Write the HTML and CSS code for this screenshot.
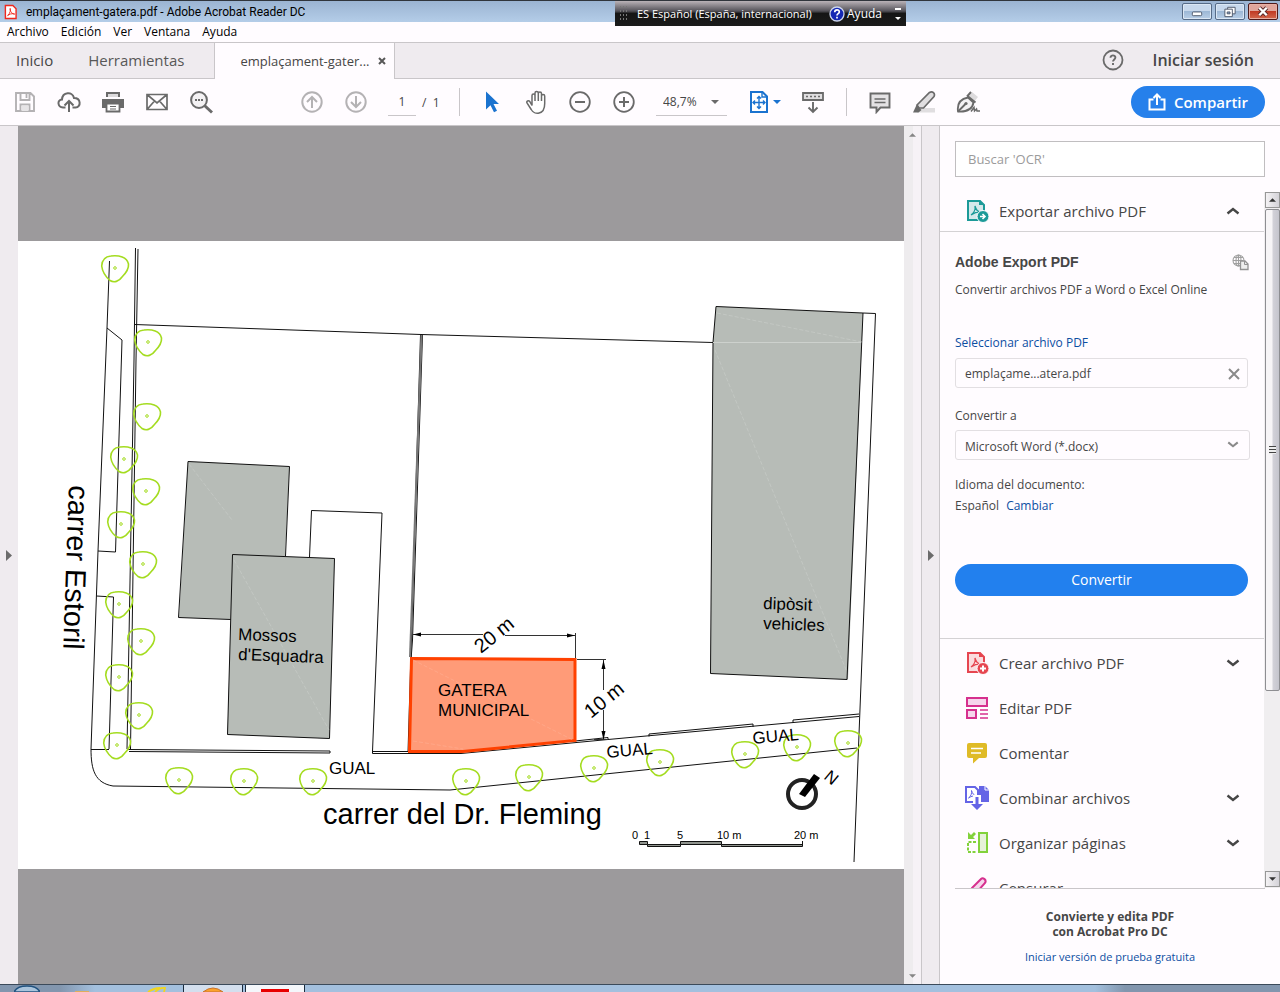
FILE: index.html
```html
<!DOCTYPE html>
<html lang="es">
<head>
<meta charset="utf-8">
<meta name="viewport" content="width=device-width, initial-scale=1">
<title>emplaçament-gatera.pdf - Adobe Acrobat Reader DC</title>
<link rel="stylesheet" href="styles.css">
</head>
<body>
<svg class="defs" aria-hidden="true">
  <symbol id="tree" viewBox="-15 -15 30 30" overflow="visible"><path d="M-13.300-2C-13-8-10-11.500-4-12 4-13 12-11 13.500-4 14 1 11 5 7 9 4 13.500-1 15-5 12.500-9 9-12.500 5-13.300-2Z" fill="none" stroke="#a4dc20" stroke-width="1.600"/><circle r="1.300" fill="none" stroke="#a4dc20"/></symbol>
  <symbol id="chev" viewBox="0 0 14 8"><path d="M1.500 1.500 7 6l5.500-4.500" fill="none" stroke="currentColor" stroke-width="2.400"/></symbol>
  <symbol id="caret" viewBox="0 0 8 4"><path d="M0 0h8L4 4z" fill="currentColor"/></symbol>
</svg>

<header class="titlebar">
  <svg class="app-icon" viewBox="0 0 14 16"><path d="M1.500 1h8l3.500 3.500V15H1.500z" fill="#fff" stroke="#f0281e" stroke-width="1.500"/><path d="M3.500 12.500c1.500-1 3.500-4.500 3.500-7.500 0-1.500-1-1-.5.500.7 2.500 2.500 4.500 4.500 5 1 0 .5-1-1-.8-2 0-4 .6-6 1.600" fill="none" stroke="#f0281e"/></svg>
  <h1 class="title">emplaçament-gatera.pdf - Adobe Acrobat Reader DC</h1>
  <div class="window-buttons">
    <button class="win" aria-label="Minimizar"><svg viewBox="0 0 30 16"><rect x="10" y="8.500" width="10" height="4" rx="1" fill="#fff" stroke="#4b5669"/></svg></button>
    <button class="win" aria-label="Restaurar"><svg viewBox="0 0 30 16"><path d="M12.500 3.500h8v7h-8z" fill="#fff" stroke="#4b5669"/><path d="M9.500 5.500h8v8h-8z" fill="#fff" stroke="#4b5669"/><path d="M12 8.500h3v2h-3z" fill="#8fa9c8" stroke="#4b5669"/></svg></button>
    <button class="win win-close" aria-label="Cerrar"><svg viewBox="0 0 30 16"><path d="m11 4 8 8m0-8-8 8" stroke="#5a2a2a" stroke-width="4.500"/><path d="m11 4 8 8m0-8-8 8" stroke="#fff" stroke-width="2.600"/></svg></button>
  </div>
  <div class="langbar">
    <span class="grip"></span>
    <span class="lang-name">ES Español (España, internacional)</span>
    <svg class="lang-q" viewBox="0 0 16 16"><circle cx="8" cy="8" r="7" fill="#1428b4" stroke="#cdd6ee" stroke-width="1.300"/><path d="M5.700 6.300c0-3.400 4.800-3.200 4.600-.3C10.200 7.600 8 7.600 8 9.400M8 10.800v1.800" fill="none" stroke="#fff" stroke-width="1.700"/></svg>
    <span class="lang-help">Ayuda</span>
    <svg class="lang-more" viewBox="0 0 6 14"><path d="M0 1h6v2H0zM0 10h6l-3 3z" fill="#fff"/></svg>
  </div>
</header>

<nav class="menubar">
  <button>Archivo</button><button>Edición</button><button>Ver</button><button>Ventana</button><button>Ayuda</button>
</nav>

<div class="tabs">
  <button class="tab tab-home">Inicio</button>
  <button class="tab tab-tools">Herramientas</button>
  <div class="tab-doc"><span>emplaçament-gater...</span><button aria-label="Cerrar pestaña"><svg viewBox="0 0 8 8"><path d="m1 1 6 6m0-6L1 7" stroke="#585858" stroke-width="2"/></svg></button></div>
  <div class="account">
    <button class="help" aria-label="Ayuda"><svg viewBox="0 0 22 22"><circle cx="11" cy="11" r="9.500" fill="none" stroke="#6a6a6a" stroke-width="1.800"/><path d="M8.500 8.700c0-3.200 5-3 4.900-.1 0 1.800-2.400 2-2.400 4M11 14v2" fill="none" stroke="#6a6a6a" stroke-width="1.900"/></svg></button>
    <button class="signin">Iniciar sesión</button>
  </div>
</div>

<div class="toolbar">
  <div class="group">
    <button class="tool" aria-label="Guardar"><svg viewBox="0 0 24 24"><path d="M3 3h14.500L21 6.500V21H3zM7.500 3v7h9V3M7.500 21v-6.500h9V21" fill="none" stroke="#b4b2b4" stroke-width="1.900"/><path d="M8.500 15.500h7V21h-7z" fill="#e6e4e6"/><path d="M13.500 4v4" stroke="#b4b2b4" stroke-width="1.800"/></svg></button>
    <button class="tool" aria-label="Subir"><svg viewBox="0 0 24 24"><path d="M8.500 17.500H6C.500 17-.200 10 5 9.500 5.500 2 15.500 1 17 8c7 0 7.500 9 1.500 9.500h-3M12 22V11m-4.500 4.500L12 11l4.500 4.500" fill="none" stroke="#6a6a6a" stroke-width="2"/></svg></button>
    <button class="tool" aria-label="Imprimir"><svg viewBox="0 0 24 24"><path d="M5 2h14v5H5zM1 9h22v9h-4v-4H5v4H1z" fill="#6a6a6a"/><path d="M7 4h10v3H7z" fill="#dcdadc"/><path d="M5.500 13.500h13v8h-13z" fill="#fff" stroke="#6a6a6a" stroke-width="1.800"/><path d="M9 16.500h6M9 19h6" stroke="#6a6a6a" stroke-width="1.200"/></svg></button>
    <button class="tool" aria-label="Correo"><svg viewBox="0 0 24 24"><path d="M2 4.500h20v15H2zl10 8.500 10-8.500M2 19.500l7.500-8.500M22 19.500 14.500 11" fill="none" stroke="#6a6a6a" stroke-width="1.700"/></svg></button>
    <button class="tool" aria-label="Buscar"><svg viewBox="0 0 24 24"><circle cx="10" cy="10" r="7.900" fill="#f4f2f4" stroke="#6a6a6a" stroke-width="2"/><path d="m15.500 15.500 7.500 7" stroke="#6a6a6a" stroke-width="3"/><path d="M6 10h2m1 0h2m1 0h2" stroke="#6a6a6a" stroke-width="2"/></svg></button>
  </div>
  <div class="group group-pages">
    <button class="tool" aria-label="Página anterior"><svg viewBox="0 0 24 24"><g fill="none" stroke="#b4b2b4" stroke-width="2"><circle cx="12" cy="12" r="9.700"/><path d="M12 18V7m-5 5 5-5 5 5"/></g></svg></button>
    <button class="tool" aria-label="Página siguiente"><svg viewBox="0 0 24 24"><g fill="none" stroke="#b4b2b4" stroke-width="2"><circle cx="12" cy="12" r="9.700"/><path d="M12 6v11m-5-5 5 5 5-5"/></g></svg></button>
    <input class="page-no" aria-label="Página" value="1"><span class="page-total">/&nbsp; 1</span>
  </div>
  <span class="sep"></span>
  <div class="group group-view">
    <button class="tool" aria-label="Seleccionar"><svg viewBox="0 0 24 24"><path d="M6 1.500v18l4.500-4.300 3.500 7 3-1.500-3.500-6.700H19z" fill="#1b73cf"/></svg></button>
    <button class="tool" aria-label="Mano"><svg viewBox="0 0 24 24"><path d="M7 15.500V5.500c0-2 3-2 3 0V11 3c0-2 3.300-2 3.300 0v8-7.500c0-2 3.200-2 3.200 0V11 6c0-2 3.200-2 3.200 0v7.500c0 12-10.500 11.500-13.500 6L2 13c-1-2 1.500-3 3-1.200z" transform="translate(1 0)" fill="#fff" stroke="#6a6a6a" stroke-width="1.500"/></svg></button>
    <button class="tool" aria-label="Reducir"><svg viewBox="0 0 24 24"><g fill="none" stroke="#6a6a6a" stroke-width="1.800"><circle cx="12" cy="12" r="9.800"/><path d="M7 12h10" stroke-width="2"/></g></svg></button>
    <button class="tool" aria-label="Ampliar"><svg viewBox="0 0 24 24"><g fill="none" stroke="#6a6a6a" stroke-width="1.800"><circle cx="12" cy="12" r="9.800"/><path d="M7 12h10M12 7v10" stroke-width="2"/></g></svg></button>
    <div class="zoom"><select aria-label="Zoom"><option>48,7%</option></select><svg class="caret"><use href="#caret"/></svg></div>
    <button class="tool fit" aria-label="Ajustar"><svg viewBox="0 0 24 24"><path d="M4 2h11.500L20 6.500V22H4z" fill="#fff" stroke="#1b73cf" stroke-width="2"/><path d="M15 2v5h5M12 7v11M6.500 12.500h11M10 8.500l2-2 2 2M10 16.500l2 2 2-2M8 10.500l-2 2 2 2M16 10.500l2 2-2 2" fill="none" stroke="#1b73cf" stroke-width="1.400"/></svg><svg class="caret"><use href="#caret"/></svg></button>
    <button class="tool" aria-label="Barra de herramientas"><svg viewBox="0 0 24 24"><path d="M2 3h20v7H2z" fill="#e0dee0" stroke="#6a6a6a" stroke-width="1.800"/><path d="M5 6.500h14" stroke="#6a6a6a" stroke-width="1.600" stroke-dasharray="2 2"/><path d="M12 12v10m-4.500-4.500L12 22l4.500-4.500" fill="none" stroke="#6a6a6a" stroke-width="1.900"/></svg></button>
  </div>
  <span class="sep"></span>
  <div class="group group-mark">
    <button class="tool" aria-label="Comentar"><svg viewBox="0 0 24 24"><path d="M2.500 3.500h19v14h-9L8.500 22v-4.500h-6z" fill="#e4e2e4" stroke="#6a6a6a" stroke-width="1.900"/><path d="M6.500 9h11M6.500 12.500h11" stroke="#6a6a6a" stroke-width="1.300"/></svg></button>
    <button class="tool" aria-label="Resaltar"><svg viewBox="0 0 24 24"><path d="M7 18h16v4.500H5z" fill="#e0dee0"/><path d="M5 15 17.500 2.500c3-2 6 1 4.500 4L11.500 18 7 18z" fill="#e0dee0" stroke="#6a6a6a" stroke-width="1.700"/><path d="m4.500 15 5 5-3 2.500H1z" fill="#6a6a6a"/></svg></button>
    <button class="tool" aria-label="Firmar"><svg viewBox="0 0 24 24"><path d="m12 7 4-5 6 5-4 5z" fill="#dddbdd"/><path d="M2 21.500C1 14 4 9 12 7.500l5.500 5C16.500 19 11 22 2 21.500z" fill="#f4f2f4" stroke="#6a6a6a" stroke-width="1.800"/><path d="m2 21.500 7.500-7.500M11 6.500 15 2M11.500 6l8 6.500" fill="none" stroke="#6a6a6a" stroke-width="1.900"/><circle cx="10" cy="13.500" r="1.600" fill="#6a6a6a"/><path d="m15 21.500 3-4 .5 3.500 2-2 .5 2h3" fill="none" stroke="#6a6a6a" stroke-width="1.500"/></svg></button>
  </div>
  <button class="share"><svg viewBox="0 0 18 18"><path d="M5.500 6.500h-4v10h15v-10h-4M9 12V2M5.500 5 9 1.500 12.500 5" fill="none" stroke="#fff" stroke-width="2"/></svg>Compartir</button>
</div>

<main class="workspace">
  <button class="strip strip-left" aria-label="Mostrar panel izquierdo"><svg viewBox="0 0 6 11"><path d="M0 0v11l6-5.500z" fill="#6b6b6b"/></svg></button>
  <section class="viewer">
    <svg class="page" viewBox="18 241 886 628" role="img" aria-label="Plano de emplazamiento">
      <rect x="18" y="241" width="886" height="628" fill="#fff"/>
      <path d="M188 461.500 289.500 466.500 285 557 332 559 329.500 738.500 227.500 734.500 231 619.500 179 617.500z" fill="#b7bcb7"/>
      <path d="M716 306.500 863 313 848 679.500 710.500 673.500 713 342.500z" fill="#b7bcb7"/>
      <g fill="none" stroke="#111" stroke-width="1">
        <path d="M285.500 556 289.500 466.500 188 461.500 178.500 617.500 231 619.500"/>
        <path d="M232.500 554.500 334.500 558.500 329.500 738.500 227.500 734.500z" fill="#b7bcb7"/>
        <path d="M716 306.500 863 313 847 679.500 710.500 673.500 713 342.500z"/>
        <path d="M109.500 261 107 328 98 551 91 749M107 328 122 340 115.500 552 98 551M96.500 596 113.500 597 109 749"/>
        <path d="M135.500 248 134 360 127 749M138 249 136 360 130.500 749"/>
        <path d="M134.500 324.500 421 334.500 713 342.500M863 313 875.500 313.500 854 862"/>
        <path d="M420.500 335 408 752M422.500 335 412.500 640 411 660"/>
        <path d="M309.500 557 311.500 510.500 382 513 372.500 751.500H409V753.500H372.500V750"/>
        <path d="M91 749.500H109M128 749.500 330 751v2L129 751.500M91 749C91 770 95 783 113 786L450 790 857 748"/>
        <path d="M408 753.500H461L608 739.500V737.500L575 741M608 739.500 859 716.500M649 736.500V734L753 724V727M793 722.500V720L859 714"/>
      </g>
      <g stroke="#cdd1cd" stroke-width="1" fill="none"><path d="M713 342.500h148"/><path d="M717 313l145 29M715 350 847 672M189 464 232 520M234 560 329 730" stroke-dasharray="4 2" opacity=".5"/></g>
      <path d="M421.500 335 410 657" stroke="#777" stroke-width="2"/>
      <path d="M411.500 658.500 575 659.500V740.500L463 751.500H409.500z" fill="#ff9b78" stroke="#ff4100" stroke-width="3"/>
      <path d="m413 660 160 80M413 741l50 8" stroke="#ffad90" stroke-dasharray="4 2" opacity=".7"/>
      <g stroke="#333" fill="none"><path d="M413 634.500H483M505 635.500H575M575.500 633V658M577 659.500H606M603.500 660V690M603.500 710V740M594 739.500H608"/></g>
      <path d="m413 634.500 8-2v4zM575 635.500l-8-2v4zM603.500 660l-2 9h4zM603.500 740l-2-9h4z"/>
      <g><use href="#tree" x="115" y="268" width="30" height="30" transform="translate(-15 -15)"/><use href="#tree" x="148" y="342" width="30" height="30" transform="translate(-15 -15)"/><use href="#tree" x="147" y="416" width="30" height="30" transform="translate(-15 -15)"/><use href="#tree" x="124" y="459" width="30" height="30" transform="translate(-15 -15)"/><use href="#tree" x="146" y="491" width="30" height="30" transform="translate(-15 -15)"/><use href="#tree" x="121" y="524" width="30" height="30" transform="translate(-15 -15)"/><use href="#tree" x="143" y="564" width="30" height="30" transform="translate(-15 -15)"/><use href="#tree" x="119" y="604" width="30" height="30" transform="translate(-15 -15)"/><use href="#tree" x="141" y="641" width="30" height="30" transform="translate(-15 -15)"/><use href="#tree" x="119" y="677" width="30" height="30" transform="translate(-15 -15)"/><use href="#tree" x="139" y="715" width="30" height="30" transform="translate(-15 -15)"/><use href="#tree" x="117" y="745" width="30" height="30" transform="translate(-15 -15)"/><use href="#tree" x="179" y="780" width="30" height="30" transform="translate(-15 -15)"/><use href="#tree" x="244" y="781" width="30" height="30" transform="translate(-15 -15)"/><use href="#tree" x="313" y="781" width="30" height="30" transform="translate(-15 -15)"/><use href="#tree" x="466" y="781" width="30" height="30" transform="translate(-15 -15)"/><use href="#tree" x="529" y="777" width="30" height="30" transform="translate(-15 -15)"/><use href="#tree" x="594" y="768" width="30" height="30" transform="translate(-15 -15)"/><use href="#tree" x="660" y="762" width="30" height="30" transform="translate(-15 -15)"/><use href="#tree" x="745" y="754" width="30" height="30" transform="translate(-15 -15)"/><use href="#tree" x="797" y="747" width="30" height="30" transform="translate(-15 -15)"/><use href="#tree" x="848" y="743" width="30" height="30" transform="translate(-15 -15)"/></g>
      <g class="map-label">
        <text transform="translate(238 640) rotate(2)">Mossos</text>
        <text transform="translate(238 660) rotate(2)">d'Esquadra</text>
        <text transform="translate(763 609) rotate(2)">dipòsit</text>
        <text transform="translate(763 629) rotate(2)">vehicles</text>
        <text x="438" y="696">GATERA</text>
        <text x="438" y="716">MUNICIPAL</text>
        <text x="329" y="774">GUAL</text>
        <text transform="translate(607 758) rotate(-5)">GUAL</text>
        <text transform="translate(753 744) rotate(-5)">GUAL</text>
        <text transform="translate(823 778) rotate(40)">N</text>
      </g>
      <g class="map-measure">
        <text transform="translate(481 654) rotate(-39)">20 m</text>
        <text transform="translate(591 719) rotate(-39)">10 m</text>
      </g>
      <g class="map-street">
        <text x="323" y="824">carrer del Dr. Fleming</text>
        <text transform="translate(69 485) rotate(92)">carrer Estoril</text>
      </g>
      <circle cx="802" cy="794" r="14" fill="none" stroke="#222" stroke-width="4"/>
      <path d="m799 794 15-20 6 4-15 19z"/>
      <g class="map-scale"><text x="632" y="839">0</text><text x="644" y="839">1</text><text x="677" y="839">5</text><text x="717" y="839">10 m</text><text x="794" y="839">20 m</text></g>
      <g fill="#8f938d" stroke="#111"><path d="M639.500 841.500h8v3h-8zM647.500 844.500h33v2h-33zM680.500 841.500h41v3h-41zM721.500 844.500h81v2h-81zM802.500 841v5"/></g>
    </svg>
  </section>
  <div class="scroll scroll-doc"><svg><use href="#caret"/></svg><svg><use href="#caret"/></svg></div>
  <button class="strip strip-right" aria-label="Ocultar panel derecho"><svg viewBox="0 0 6 11"><path d="M0 0v11l6-5.500z" fill="#6b6b6b"/></svg></button>

  <aside class="panel">
    <div class="search"><input aria-label="Buscar herramientas" placeholder="Buscar 'OCR'"></div>
    <div class="panel-body">
      <div class="panel-list">
        <button class="row row-export"><svg class="ico" viewBox="0 0 24 24"><path d="M3 2h12l4 4v15H3z" fill="#d4e8ea" stroke="#1c9a98" stroke-width="2"/><path d="M14 1v5h5z" fill="#1c9a98"/><path d="M6 16c3-2 4.500-6 4-9 1 4 3 6 6 6-4-.5-7 1-10 3" fill="none" stroke="#1c9a98" stroke-width="1.300"/><circle cx="18" cy="17.500" r="6" fill="#1c9a98" stroke="#fffcff"/><path d="M15 17.500h5M17.500 15l2.500 2.500-2.500 2.500" fill="none" stroke="#fff" stroke-width="1.600"/></svg><span>Exportar archivo PDF</span><svg class="chev up"><use href="#chev"/></svg></button>
        <section class="export">
          <div class="export-head"><h2>Adobe Export PDF</h2><svg viewBox="0 0 17 17"><g fill="none" stroke="#a0a0a0" stroke-width="1.100"><circle cx="6.500" cy="6.500" r="5.500"/><ellipse cx="6.500" cy="6.500" rx="2.500" ry="5.500"/><path d="M1 6.500h10M2 3.500h9M2 9.500h9M6.500 1v11"/></g><path d="M8.500 7h4.500l3 3v5.500H8.500z" fill="#eee" stroke="#929292" stroke-width="1.300"/><path d="M12.500 7v3.500H16" fill="none" stroke="#929292"/></svg></div>
          <p class="intro">Convertir archivos PDF a Word o Excel Online</p>
          <a class="pick" href="#file">Seleccionar archivo PDF</a>
          <div class="field file" id="file"><span>emplaçame...atera.pdf</span><button aria-label="Quitar archivo"><svg viewBox="0 0 12 12"><path d="m1 1 10 10M11 1 1 11" stroke="#8a8a8a" stroke-width="2"/></svg></button></div>
          <label class="to" for="format">Convertir a</label>
          <div class="format"><select class="field" id="format"><option>Microsoft Word (*.docx)</option></select><svg><use href="#chev"/></svg></div>
          <p class="doc-lang">Idioma del documento:<br>Español <a href="#lang">Cambiar</a></p>
          <button class="convert">Convertir</button>
        </section>
        <div class="tools">
          <button class="row"><svg class="ico" viewBox="0 0 24 24"><path d="M3 2h12l4 4v15H3z" fill="#fadcde" stroke="#e64650" stroke-width="2"/><path d="M14 1v5h5z" fill="#e64650"/><path d="M6 16c3-2 4.500-6 4-9 1 4 3 6 6 6-4-.5-7 1-10 3" fill="none" stroke="#e64650" stroke-width="1.300"/><circle cx="18" cy="17.500" r="6" fill="#e64650" stroke="#fffcff"/><path d="M15 17.500h6M18 14.500v6" stroke="#fff" stroke-width="2"/></svg><span>Crear archivo PDF</span><svg class="chev"><use href="#chev"/></svg></button>
          <button class="row"><svg class="ico" viewBox="0 0 24 24"><g fill="#f6d6ec" stroke="#d6308e" stroke-width="2"><path d="M2 2h20v8H2zM2 14h9v8H2z"/></g><path d="M15 14h8M15 18h8M15 22h8" stroke="#d6308e" stroke-width="1.300"/></svg><span>Editar PDF</span></button>
          <button class="row"><svg class="ico" viewBox="0 0 24 24"><path d="M4 2h16q2 0 2 2v11q0 2-2 2h-6l-6 5.500V17H4q-2 0-2-2V4q0-2 2-2z" fill="#dfbb27"/><path d="M6 7.500h12M6 12h10" stroke="#fff" stroke-width="1.700"/></svg><span>Comentar</span></button>
          <button class="row"><svg class="ico" viewBox="0 0 24 24"><path d="M14 0h6l4 4v12H14z" fill="#6464e6"/><path d="M20 0v4h4" fill="none" stroke="#fff"/><path d="M1 1h9l3 3v12H1z" fill="#fff" stroke="#6464e6" stroke-width="2"/><path d="M3.500 12C6 10.500 7 7 6.500 4.500c1 3 2 4.500 4.500 5.500-3-.5-5 .5-7.500 2" fill="none" stroke="#6464e6"/><path d="M8 9h8v10h4l-8 5.500L4 19h4z" fill="#fff"/><path d="M10.500 11h3v7H18l-6 6-6-6h4.500z" fill="#6464e6"/></svg><span>Combinar archivos</span><svg class="chev"><use href="#chev"/></svg></button>
          <button class="row"><svg class="ico" viewBox="0 0 24 24"><path d="M14 2h8v19h-8z" fill="#e6f2da" stroke="#82d23c" stroke-width="2"/><path d="M11 11H3v10h8" fill="none" stroke="#82d23c" stroke-width="2" stroke-dasharray="3 1.500"/><path d="M3 1v7h7L8 6l3-3-2-2-3 3z" fill="#82d23c"/></svg><span>Organizar páginas</span><svg class="chev"><use href="#chev"/></svg></button>
          <button class="row"><svg class="ico" viewBox="0 0 24 24"><path d="M7 12 16 3c2-2 6 1 4 4L11 17l-6 2z" fill="#f6d6ec" stroke="#d6308e" stroke-width="2"/></svg><span>Censurar</span></button>
        </div>
      </div>
      <div class="scroll scroll-panel"><span class="arrow up"><svg><use href="#caret"/></svg></span><span class="thumb"></span><span class="arrow"><svg><use href="#caret"/></svg></span></div>
    </div>
    <footer class="promo"><p>Convierte y edita PDF<br>con Acrobat Pro DC</p><a href="#trial">Iniciar versión de prueba gratuita</a></footer>
  </aside>
</main>

<div class="taskbar">
  <svg class="start" viewBox="0 0 26 7"><path d="M0 7Q3 1 13 1T26 7z" fill="#a9c4dc" stroke="#20527f" stroke-width="1.500"/></svg>
  <svg class="pin" viewBox="0 0 14 7"><path d="M0 6h14v1H0z" fill="#dfae5c"/></svg>
  <svg class="ie" viewBox="0 0 20 7"><path d="M2 7Q8 3 14 3M9 7Q14 2 19 3L18 7" fill="none" stroke="#f2d51c" stroke-width="1.800"/></svg>
  <button class="task" aria-label="Navegador"><svg viewBox="0 0 20 7"><path d="M0 7Q10-1 20 7z" fill="#fba22c" stroke="#c8732e"/></svg></button>
  <button class="task task-active" aria-label="Acrobat Reader"><svg viewBox="0 0 28 7"><path d="M0 4h28v3H0z" fill="#e80000"/></svg></button>
</div>
</body>
</html>
```
FILE: styles.css
```css
* { box-sizing: border-box; }
body {
  margin: 0;
  height: 100vh;
  display: flex;
  flex-direction: column;
  overflow: hidden;
  background: #fffcff;
  color: #464646;
  font-family: "Open Sans", "Noto Sans", sans-serif;
  font-size: 12px;
}
button, input, select { font: inherit; color: inherit; border: 0; padding: 0; margin: 0; background: none; }
a { color: #0c4ea2; text-decoration: none; }
h1, h2, p { margin: 0; }
svg { display: block; flex: none; }
.defs { position: absolute; width: 0; height: 0; }

.titlebar {
  position: relative;
  flex: none;
  display: flex;
  align-items: center;
  height: 22px;
  padding: 0 0 0 4px;
  border-top: 1px solid #30353c;
  background: linear-gradient(#9bb4d2, #b4cde8);
  color: #000;
}
.app-icon { width: 13px; height: 16px; }
.title { margin-left: 9px; font: 400 12px Roboto, "Open Sans", sans-serif; }
.window-buttons { display: flex; gap: 3px; margin-left: auto; padding-right: 2px; }
.win {
  width: 30px;
  height: 17px;
  border: 1px solid #566b87;
  border-radius: 2px;
  background: linear-gradient(#c7d8ec 45%, #9db8d6 50%, #b9cfe7);
  box-shadow: inset 0 0 0 1px #dbe7f4;
}
.win svg { width: 28px; height: 15px; }
.win-close { border-color: #4e1a1a; background: linear-gradient(#e0a69c 45%, #c13b25 50%, #d4694e); box-shadow: inset 0 0 0 1px #e8b0a4; }
.langbar {
  position: absolute;
  top: 0;
  left: 615px;
  display: flex;
  align-items: center;
  width: 291px;
  height: 25px;
  padding: 0 5px 0 4px;
  background: linear-gradient(#bab3b8, #55535a 40%, #151515 50%, #1b1b1b);
  color: #fff;
}
.grip { width: 8px; height: 17px; background: radial-gradient(circle, #777 1px, transparent 1px) 0 0 / 3px 4px; }
.lang-name { margin-left: 10px; font-size: 11px; }
.lang-q { width: 16px; height: 16px; margin-left: auto; }
.lang-help { margin: 0 13px 0 2px; }
.lang-more { width: 6px; height: 14px; }

.menubar { flex: none; display: flex; align-items: center; gap: 12px; height: 20px; padding: 0 0 2px 7px; color: #000; }

.tabs {
  flex: none;
  display: flex;
  height: 37px;
  border-top: 1px solid #c9c6c9;
  background: #efebef;
  box-shadow: inset 0 -1px #c9c6c9;
  font-size: 15px;
}
.tab-home { padding: 0 16px 2px; }
.tab-tools { padding: 0 30px 2px 19px; color: #585858; }
.tab-doc {
  display: flex;
  align-items: center;
  gap: 8px;
  width: 181px;
  padding-left: 25px;
  border: solid #c9c6c9;
  border-width: 0 1px;
  background: #fffcff;
  font-size: 13px;
}
.tab-doc svg { width: 8px; height: 8px; }
.account { display: flex; align-items: center; gap: 29px; margin-left: auto; padding: 0 26px 2px 0; }
.help svg { width: 22px; height: 22px; }
.signin { font-size: 16px; font-weight: 600; }

.toolbar { flex: none; display: flex; align-items: center; height: 47px; padding: 0 15px 0 3px; border-bottom: 1px solid #c9c6c9; }
.group { display: flex; align-items: center; }
.tool { display: flex; align-items: center; justify-content: center; width: 44px; height: 40px; }
.tool > svg:first-child { width: 24px; height: 24px; }
.group-pages { margin-left: 67px; }
.page-no { width: 28px; height: 28px; margin-left: 10px; border-bottom: 1px solid #c9c6c9; text-align: center; }
.page-total { width: 37px; margin-left: 6px; }
.sep { width: 1px; height: 28px; margin-right: 10px; background: #c9c6c9; }
.zoom { position: relative; width: 71px; margin: 0 10px; }
.zoom select { appearance: none; width: 100%; height: 28px; padding-left: 7px; border-bottom: 1px solid #c9c6c9; }
.caret { width: 8px; height: 4px; color: #6a6a6a; }
.zoom .caret { position: absolute; right: 8px; top: 12px; pointer-events: none; }
.fit { width: 54px; gap: 2px; }
.fit .caret { color: #1b73cf; }
.group-view + .sep { margin: 0 11px; }
.share {
  display: flex;
  align-items: center;
  justify-content: center;
  gap: 8px;
  width: 134px;
  height: 32px;
  margin-left: auto;
  border-radius: 16px;
  background: #2680eb;
  color: #fff;
  font-size: 15px;
  font-weight: 600;
}
.share svg { width: 18px; height: 18px; }

.workspace { flex: 1; display: flex; min-height: 0; }
.strip { flex: none; display: flex; align-items: center; justify-content: center; width: 18px; background: #efebef; }
.strip svg { width: 6px; height: 11px; }
.strip-right { width: 19px; border: solid #c9c6c9; border-width: 0 1px; }
.viewer { flex: 1; display: flex; align-items: center; min-width: 0; background: #9c9a9c; }
.page { width: 100%; }
.page text { font-family: "Liberation Sans", Arial, sans-serif; fill: #000; }
.map-label { font-size: 17px; }
.map-measure { font-size: 20px; }
.map-street { font-size: 29px; }
.map-scale { font-size: 11px; }
.scroll { flex: none; display: flex; flex-direction: column; justify-content: space-between; align-items: center; }
.scroll svg { width: 7px; height: 4px; }
.scroll-doc { width: 17px; padding: 7px 0 6px; background: linear-gradient(90deg, #eeecee 50%, #f6f2f6 50%); color: #858585; }
.scroll-doc svg:first-child, .arrow.up svg { transform: rotate(180deg); }

.panel { flex: none; display: flex; flex-direction: column; width: 340px; }
.search { padding: 15px 15px 15px; }
.search input { display: block; width: 100%; height: 36px; padding: 0 12px; border: 1px solid #c0bec0; background: #fff; font-size: 13px; }
.search input::placeholder { color: #9b9b9b; opacity: 1; }
.panel-body { flex: 1; display: flex; min-height: 0; }
.panel-list { flex: 1; min-width: 0; overflow: hidden; }
.row { display: flex; align-items: center; gap: 10px; width: 100%; height: 45px; padding: 0 24px 0 25px; font-size: 15px; text-align: left; }
.row span { flex: 1; }
.row-export { height: 40px; padding-bottom: 2px; border-bottom: 1px solid #d4d2d4; }
.ico { width: 24px; height: 24px; }
.chev { width: 14px; height: 8px; color: #464646; }
.chev.up { transform: rotate(180deg); }
.export { height: 407px; padding: 20px 14px 0 15px; border-bottom: 1px solid #d4d2d4; line-height: 20px; }
.export-head { display: flex; justify-content: space-between; align-items: center; padding-right: 1px; }
.export-head svg { width: 17px; height: 17px; }
.export h2 { font: bold 14px/20px "Liberation Sans", Arial, sans-serif; }
.intro { margin-top: 8px; }
.pick { display: block; margin-top: 33px; }
.field { display: flex; align-items: center; width: 100%; height: 30px; padding: 1px 9px 0; border: 1px solid #e2dfe2; border-radius: 3px; }
.file { justify-content: space-between; width: auto; margin: 5px 2px 0 0; padding-right: 7px; }
.file svg { width: 12px; height: 12px; }
.to { display: block; margin-top: 18px; }
.format { position: relative; margin-top: 4px; }
.format select { appearance: none; padding-top: 3px; }
.format svg { position: absolute; right: 11px; top: 11px; width: 12px; height: 7px; color: #8a8a8a; pointer-events: none; }
.doc-lang { margin-top: 14px; line-height: 21px; }
.doc-lang a { margin-left: 4px; }
.convert { display: block; width: 293px; max-width: 100%; height: 32px; margin-top: 48px; border-radius: 16px; background: #2280ee; color: #fff; font-size: 14px; }
.tools { padding-top: 1px; }
.scroll-panel { width: 16px; background: #f0eef0; padding-bottom: 1px; color: #333; justify-content: flex-start; }
.arrow { display: flex; align-items: center; justify-content: center; width: 15px; height: 16px; border: 1px solid #979797; background: linear-gradient(90deg, #f4f2f4, #d4d2d8); }
.thumb { position: relative; width: 15px; height: 482px; margin: 1px 0 auto; border: 1px solid #8e8e92; border-radius: 2px; background: linear-gradient(90deg, #f7f5f7 45%, #d2d1d8 55%, #c5c5cd); }
.thumb::after { content: ""; position: absolute; left: 3px; top: 236px; width: 7px; height: 8px; background: repeating-linear-gradient(#444 0 1px, #eee 1px 3px); }
.promo { flex: none; height: 96px; margin: 0 15px; padding: 20px 0 0; border-top: 1px solid #c9c6c9; text-align: center; font-size: 11px; line-height: 15px; }
.promo p { font-size: 12px; font-weight: 700; }
.promo a { display: block; margin-top: 10px; }

.taskbar { flex: none; display: flex; align-items: flex-end; height: 8px; border-top: 1px solid #3b4a5a; background: linear-gradient(90deg, #8296ae 60px, #a3c0de 95px, #a3c0de 1095px, #8296ae 1125px); }
.start { width: 26px; height: 7px; margin-left: 14px; }
.pin { width: 14px; height: 7px; margin-left: 35px; }
.ie { width: 20px; height: 7px; margin-left: 57px; }
.task { display: flex; justify-content: center; width: 60px; height: 7px; margin-left: 17px; border: solid #1b2b3c; border-width: 0 1px; background: #d3dfee; }
.task svg { height: 7px; width: 28px; }
.task-active { margin-left: 2px; background: #f4f7fb; }
```
